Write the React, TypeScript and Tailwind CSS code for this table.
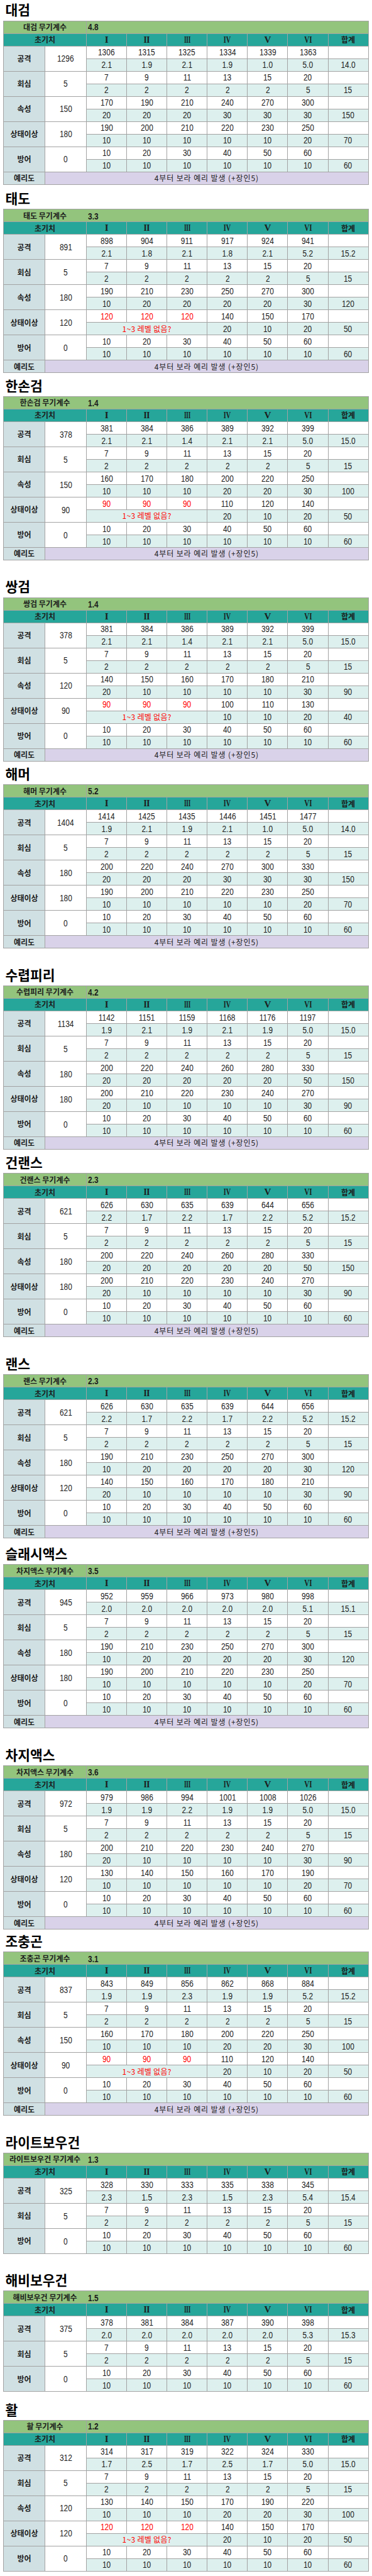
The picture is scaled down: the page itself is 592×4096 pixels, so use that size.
import React from "react";

type Stat = {
  label: string;
  init: string;
  vals: string[];
  incs: string[];
  total: string;
  red?: boolean;
};

type Weapon = {
  name: string;
  coefLabel: string;
  coef: string;
  divided: boolean;
  sharp: boolean;
  gap: string;
  stats: Stat[];
};

const st = (label: string, init: string, vals: string, incs: string, total: string, red = false): Stat => ({
  label,
  init,
  vals: vals.split(" "),
  incs: incs.split(" "),
  total,
  red,
});

// 회심 / 방어 are the same on every weapon
const crit = st("회심", "5", "7 9 11 13 15 20", "2 2 2 2 2 5", "15");
const def = st("방어", "0", "10 20 30 40 50 60", "10 10 10 10 10 10", "60");

const WEAPONS: Weapon[] = [
  {
    name: "대검", coefLabel: "대검 무기계수", coef: "4.8", divided: true, sharp: true, gap: "h-[32.5px]",
    stats: [
      st("공격", "1296", "1306 1315 1325 1334 1339 1363", "2.1 1.9 2.1 1.9 1.0 5.0", "14.0"),
      crit,
      st("속성", "150", "170 190 210 240 270 300", "20 20 20 30 30 30", "150"),
      st("상태이상", "180", "190 200 210 220 230 250", "10 10 10 10 10 20", "70"),
      def,
    ],
  },
  {
    name: "태도", coefLabel: "태도 무기계수", coef: "3.3", divided: false, sharp: true, gap: "h-[38.9px]",
    stats: [
      st("공격", "891", "898 904 911 917 924 941", "2.1 1.8 2.1 1.8 2.1 5.2", "15.2"),
      crit,
      st("속성", "180", "190 210 230 250 270 300", "10 20 20 20 20 30", "120"),
      st("상태이상", "120", "120 120 120 140 150 170", "- - - 20 10 20", "50", true),
      def,
    ],
  },
  {
    name: "한손검", coefLabel: "한손검 무기계수", coef: "1.4", divided: false, sharp: true, gap: "h-[36.6px]",
    stats: [
      st("공격", "378", "381 384 386 389 392 399", "2.1 2.1 1.4 2.1 2.1 5.0", "15.0"),
      crit,
      st("속성", "150", "160 170 180 200 220 250", "10 10 10 20 20 30", "100"),
      st("상태이상", "90", "90 90 90 110 120 140", "- - - 20 10 20", "50", true),
      def,
    ],
  },
  {
    name: "쌍검", coefLabel: "쌍검 무기계수", coef: "1.4", divided: false, sharp: true, gap: "h-[58.6px]",
    stats: [
      st("공격", "378", "381 384 386 389 392 399", "2.1 2.1 1.4 2.1 2.1 5.0", "15.0"),
      crit,
      st("속성", "120", "140 150 160 170 180 210", "20 10 10 10 10 30", "90"),
      st("상태이상", "90", "90 90 90 100 110 130", "- - - 10 10 20", "40", true),
      def,
    ],
  },
  {
    name: "해머", coefLabel: "해머 무기계수", coef: "5.2", divided: true, sharp: true, gap: "h-[36.7px]",
    stats: [
      st("공격", "1404", "1414 1425 1435 1446 1451 1477", "1.9 2.1 1.9 2.1 1.0 5.0", "14.0"),
      crit,
      st("속성", "180", "200 220 240 270 300 330", "20 20 20 30 30 30", "150"),
      st("상태이상", "180", "190 200 210 220 230 250", "10 10 10 10 10 20", "70"),
      def,
    ],
  },
  {
    name: "수렵피리", coefLabel: "수렵피리 무기계수", coef: "4.2", divided: true, sharp: true, gap: "h-[58.6px]",
    stats: [
      st("공격", "1134", "1142 1151 1159 1168 1176 1197", "1.9 2.1 1.9 2.1 1.9 5.0", "15.0"),
      crit,
      st("속성", "180", "200 220 240 260 280 330", "20 20 20 20 20 50", "150"),
      st("상태이상", "180", "200 210 220 230 240 270", "20 10 10 10 10 30", "90"),
      def,
    ],
  },
  {
    name: "건랜스", coefLabel: "건랜스 무기계수", coef: "2.3", divided: true, sharp: true, gap: "h-[37.3px]",
    stats: [
      st("공격", "621", "626 630 635 639 644 656", "2.2 1.7 2.2 1.7 2.2 5.2", "15.2"),
      crit,
      st("속성", "180", "200 220 240 260 280 330", "20 20 20 20 20 50", "150"),
      st("상태이상", "180", "200 210 220 230 240 270", "20 10 10 10 10 30", "90"),
      def,
    ],
  },
  {
    name: "랜스", coefLabel: "랜스 무기계수", coef: "2.3", divided: true, sharp: true, gap: "h-[58.9px]",
    stats: [
      st("공격", "621", "626 630 635 639 644 656", "2.2 1.7 2.2 1.7 2.2 5.2", "15.2"),
      crit,
      st("속성", "180", "190 210 230 250 270 300", "10 20 20 20 20 30", "120"),
      st("상태이상", "120", "140 150 160 170 180 210", "20 10 10 10 10 30", "90"),
      def,
    ],
  },
  {
    name: "슬래시액스", coefLabel: "차지액스 무기계수", coef: "3.5", divided: true, sharp: true, gap: "h-[41.4px]",
    stats: [
      st("공격", "945", "952 959 966 973 980 998", "2.0 2.0 2.0 2.0 2.0 5.1", "15.1"),
      crit,
      st("속성", "180", "190 210 230 250 270 300", "10 20 20 20 20 30", "120"),
      st("상태이상", "180", "190 200 210 220 230 250", "10 10 10 10 10 20", "70"),
      def,
    ],
  },
  {
    name: "차지액스", coefLabel: "차지액스 무기계수", coef: "3.6", divided: true, sharp: true, gap: "h-[58.7px]",
    stats: [
      st("공격", "972", "979 986 994 1001 1008 1026", "1.9 1.9 2.2 1.9 1.9 5.0", "15.0"),
      crit,
      st("속성", "180", "200 210 220 230 240 270", "20 10 10 10 10 30", "90"),
      st("상태이상", "120", "130 140 150 160 170 190", "10 10 10 10 10 20", "70"),
      def,
    ],
  },
  {
    name: "조충곤", coefLabel: "조충곤 무기계수", coef: "3.1", divided: false, sharp: true, gap: "h-[35.1px]",
    stats: [
      st("공격", "837", "843 849 856 862 868 884", "1.9 1.9 2.3 1.9 1.9 5.2", "15.2"),
      crit,
      st("속성", "150", "160 170 180 200 220 250", "10 10 10 20 20 30", "100"),
      st("상태이상", "90", "90 90 90 110 120 140", "- - - 20 10 20", "50", true),
      def,
    ],
  },
  {
    name: "라이트보우건", coefLabel: "라이트보우건 무기계수", coef: "1.3", divided: false, sharp: false, gap: "h-[58.6px]",
    stats: [
      st("공격", "325", "328 330 333 335 338 345", "2.3 1.5 2.3 1.5 2.3 5.4", "15.4"),
      crit,
      def,
    ],
  },
  {
    name: "해비보우건", coefLabel: "해비보우건 무기계수", coef: "1.5", divided: false, sharp: false, gap: "h-[58.2px]",
    stats: [
      st("공격", "375", "378 381 384 387 390 398", "2.0 2.0 2.0 2.0 2.0 5.3", "15.3"),
      crit,
      def,
    ],
  },
  {
    name: "활", coefLabel: "활 무기계수", coef: "1.2", divided: true, sharp: false, gap: "h-[44.7px]",
    stats: [
      st("공격", "312", "314 317 319 322 324 330", "1.7 2.5 1.7 2.5 1.7 5.0", "15.0"),
      crit,
      st("속성", "120", "130 140 150 170 190 220", "10 10 10 20 20 30", "100"),
      st("상태이상", "120", "120 120 120 140 150 170", "- - - 20 10 20", "50", true),
      def,
    ],
  },
];

const ROMAN = [
  { t: "I", cls: "" },
  { t: "II", cls: "scale-x-[0.9] tracking-[-0.5px]" },
  { t: "III", cls: "scale-x-[0.62] tracking-[-0.5px]" },
  { t: "IV", cls: "scale-x-[0.68]" },
  { t: "V", cls: "" },
  { t: "VI", cls: "scale-x-[0.74]" },
];

const kr = "font-['Noto_Sans_CJK_KR',sans-serif] text-[12px] leading-none";
const cell = "flex items-center justify-center";

// the sheet's digits are tall and narrow, so Liberation Sans is squeezed a bit
function N({ v, bold = false, left = false }: { v: string; bold?: boolean; left?: boolean }) {
  return (
    <span
      className={`inline-block scale-x-[0.77] font-['Liberation_Sans',sans-serif] text-[15.5px] leading-none ${
        bold ? "font-bold" : ""
      } ${left ? "origin-left" : ""}`}
    >
      {v}
    </span>
  );
}

function WeaponTable({ w }: { w: Weapon }) {
  return (
    <div className="ml-[5px] grid w-fit grid-cols-[65px_65px_repeat(7,63.1px)] auto-rows-[19px] gap-px bg-[#a3a3a3] p-px text-[#1c1c1c]">
      {w.divided ? (
        <>
          <div className={`col-span-2 bg-[#93c47d] ${cell} ${kr} font-bold`}>{w.coefLabel}</div>
          <div className="col-span-7 flex items-center bg-[#93c47d] pl-[2px]">
            <N v={w.coef} bold left />
          </div>
        </>
      ) : (
        <div className="col-span-9 flex items-center bg-[#93c47d]">
          <span className={`w-[131px] whitespace-nowrap text-center ${kr} font-bold`}>{w.coefLabel}</span>
          <span className="pl-[3px]">
            <N v={w.coef} bold left />
          </span>
        </div>
      )}

      <div className={`col-span-2 bg-[#26a69a] ${cell} ${kr} font-bold`}>초기치</div>
      {ROMAN.map((r) => (
        <div key={r.t} className={`bg-[#26a69a] ${cell}`}>
          <span className={`inline-block font-['Liberation_Serif',serif] text-[15px] font-bold leading-none ${r.cls}`}>{r.t}</span>
        </div>
      ))}
      <div className={`bg-[#26a69a] ${cell} ${kr} font-bold`}>합계</div>

      {w.stats.map((s) => (
        <React.Fragment key={s.label}>
          <div className={`row-span-2 bg-[#d0e0e3] ${cell} ${kr} font-bold`}>{s.label}</div>
          <div className={`row-span-2 bg-white ${cell}`}>
            <N v={s.init} />
          </div>
          {s.vals.map((v, i) => (
            <div key={"v" + i} className={`bg-white ${cell} ${s.red && i < 3 ? "text-[#ff0000]" : ""}`}>
              <N v={v} />
            </div>
          ))}
          <div className="bg-white" />
          {s.red && (
            <div className={`col-span-3 bg-[#ddf0ee] ${cell} ${kr} text-[#ff0000] tracking-[0.3px]`}>1~3 레벨 없음?</div>
          )}
          {s.incs.map((v, i) =>
            s.red && i < 3 ? null : (
              <div key={"i" + i} className={`bg-[#ddf0ee] ${cell}`}>
                <N v={v} />
              </div>
            )
          )}
          <div className={`bg-[#ddf0ee] ${cell}`}>
            <N v={s.total} />
          </div>
        </React.Fragment>
      ))}

      {w.sharp && (
        <>
          <div className={`bg-[#d0e0e3] ${cell} ${kr} font-bold`}>예리도</div>
          <div className={`col-span-8 bg-[#d9d2e9] ${cell} ${kr} tracking-[0.9px]`}>4부터 보라 예리 발생 (+장인5)</div>
        </>
      )}
    </div>
  );
}

export default function App() {
  return (
    <div className="w-[592px] bg-white pb-[7px]">
      {WEAPONS.map((w) => (
        <section key={w.name}>
          <div
            className={`${w.gap} flex items-end pb-[6.7px] pl-[8.5px] font-['Noto_Sans_CJK_KR',sans-serif] text-[21.5px] font-bold leading-none text-black`}
          >
            {w.name}
          </div>
          <WeaponTable w={w} />
        </section>
      ))}
    </div>
  );
}
